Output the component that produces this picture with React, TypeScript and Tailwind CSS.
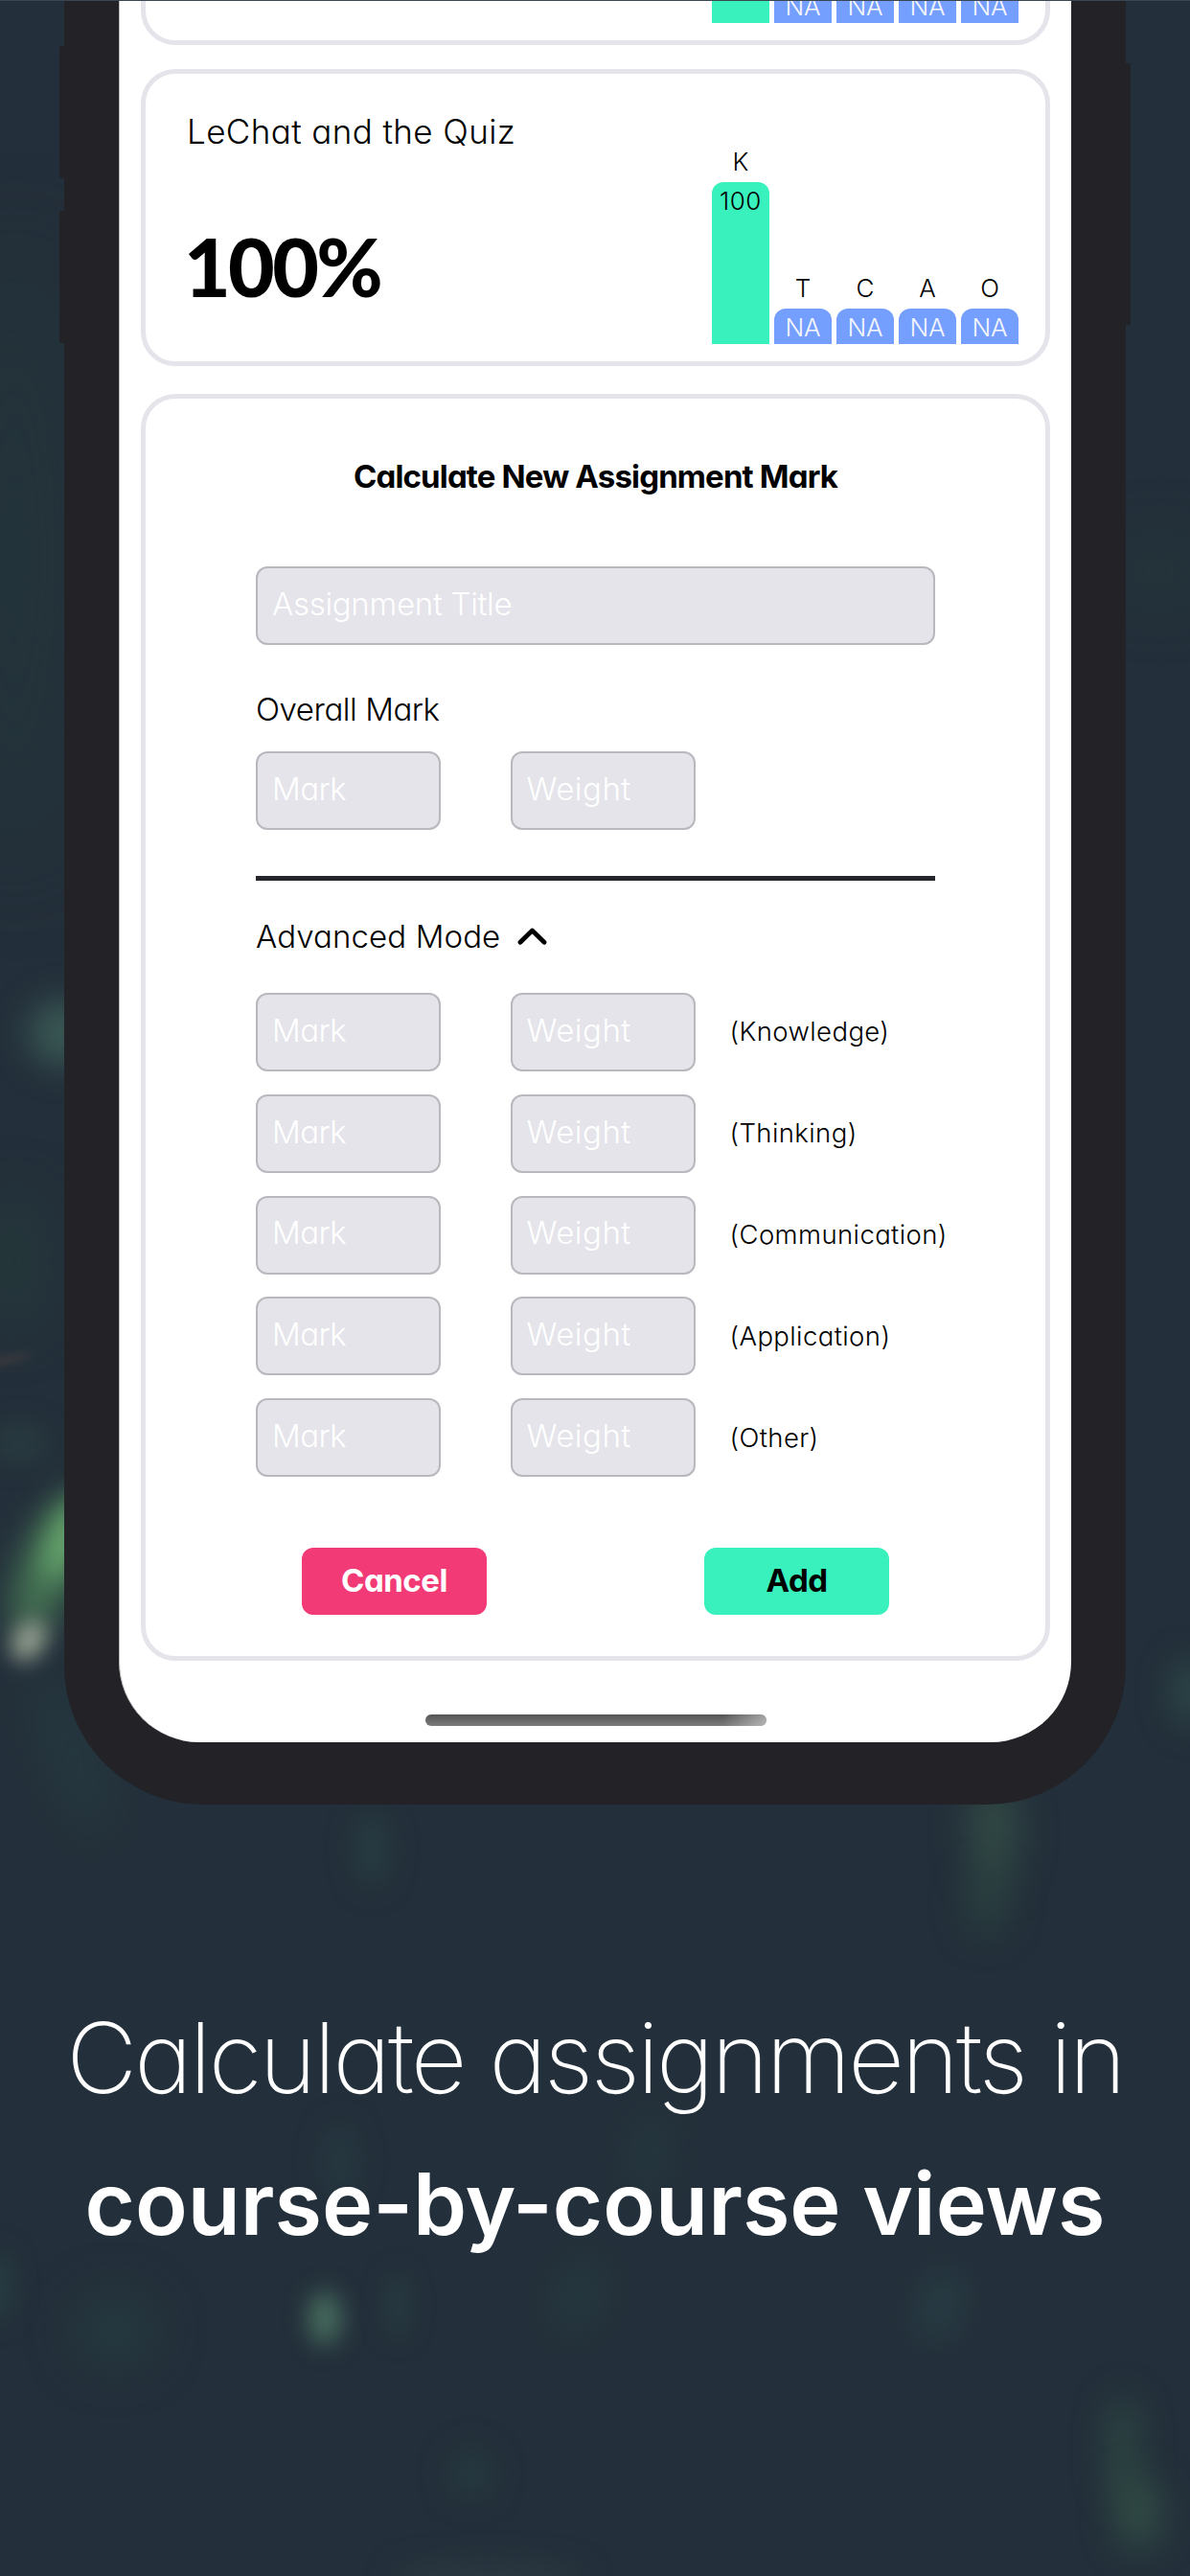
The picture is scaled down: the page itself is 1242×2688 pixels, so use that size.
import { clsx } from "clsx";

type Bar = { label: string; value: string; filled?: boolean };

const BARS: Bar[] = [
  { label: "K", value: "100", filled: true },
  { label: "T", value: "NA" },
  { label: "C", value: "NA" },
  { label: "A", value: "NA" },
  { label: "O", value: "NA" },
];

const CATEGORIES = ["(Knowledge)", "(Thinking)", "(Communication)", "(Application)", "(Other)"];

// Soft out-of-focus light spots scattered over the backdrop.
const GLOWS = [
  "left-[30px] top-[1042px] h-[70px] w-[70px] bg-[#4a7565]/60 blur-[18px]",
  "left-[24px] top-[1550px] h-[160px] w-[60px] rotate-[24deg] bg-[#4f8a5b]/75 blur-[18px]",
  "left-[52px] top-[1560px] h-[90px] w-[34px] rotate-[22deg] bg-[#72b676]/80 blur-[14px]",
  "left-[14px] top-[1688px] h-[46px] w-[32px] rotate-[30deg] bg-[#a3ad9b]/90 blur-[11px]",
  "-left-[40px] top-[1415px] h-[10px] w-[74px] -rotate-[12deg] bg-[#4a3f3f]/60 blur-[4px]",
  "-left-[10px] top-[1485px] h-[40px] w-[60px] bg-[#2d4542]/60 blur-[14px]",
  "-left-[60px] top-[260px] h-[640px] w-[150px] bg-[#24373a]/60 blur-[50px]",
  "-left-[20px] top-[1240px] h-[150px] w-[70px] bg-[#26393b]/80 blur-[26px]",
  "left-[50px] top-[1740px] h-[180px] w-[50px] -rotate-[20deg] bg-[#263f42]/60 blur-[24px]",
  "left-[1222px] top-[1730px] h-[70px] w-[40px] bg-[#2f4d4b]/80 blur-[17px]",
  "left-[1150px] top-[560px] h-[70px] w-[120px] bg-[#25383a]/60 blur-[28px]",
  "left-[374px] top-[1890px] h-[76px] w-[28px] bg-[#2c494a]/70 blur-[16px]",
  "left-[1014px] top-[1850px] h-[120px] w-[46px] bg-[#3b5a4c]/70 blur-[20px]",
  "left-[1008px] top-[1950px] h-[70px] w-[44px] bg-[#2f4a42]/60 blur-[18px]",
  "left-[340px] top-[2216px] h-[76px] w-[30px] bg-[#29454a]/60 blur-[16px]",
  "left-[658px] top-[2200px] h-[90px] w-[40px] rotate-[10deg] bg-[#263e43]/60 blur-[20px]",
  "left-[323px] top-[2390px] h-[56px] w-[32px] bg-[#528068]/85 blur-[13px]",
  "left-[404px] top-[2370px] h-[70px] w-[22px] bg-[#294347]/70 blur-[13px]",
  "left-[582px] top-[2355px] h-[80px] w-[44px] rotate-[20deg] bg-[#263e42]/70 blur-[20px]",
  "left-[960px] top-[2365px] h-[80px] w-[42px] rotate-[20deg] bg-[#294348]/70 blur-[18px]",
  "left-[80px] top-[2395px] h-[70px] w-[80px] bg-[#274044]/70 blur-[26px]",
  "left-[472px] top-[2558px] h-[44px] w-[40px] bg-[#284347]/75 blur-[17px]",
  "left-[1156px] top-[2500px] h-[110px] w-[32px] bg-[#335247]/75 blur-[18px]",
  "left-[1166px] top-[2585px] h-[74px] w-[44px] bg-[#3a5c4b]/75 blur-[19px]",
  "left-[410px] top-[2676px] h-[28px] w-[200px] bg-[#333e47]/70 blur-[16px]",
  "-left-[20px] top-[2350px] h-[70px] w-[30px] bg-[#29484c]/70 blur-[15px]",
];

function BarChart() {
  return (
    <div className="flex items-end gap-[5px]">
      {BARS.map(({ label, value, filled }) => (
        <div key={label} className="flex w-[60px] flex-col items-center text-[26px] font-[330]">
          <span className="mb-[6px] leading-[30px]">{label}</span>
          <div
            className={clsx(
              "flex w-full justify-center rounded-t-[12px] leading-[40px]",
              filled ? "h-[169px] bg-[#38f1bd] tracking-[0.5px]" : "h-[37px] bg-[#749fff] text-[#f4f6fb]",
            )}
          >
            {value}
          </div>
        </div>
      ))}
    </div>
  );
}

function MarkCard({ title, mark, className }: { title?: string; mark?: string; className?: string }) {
  return (
    <section
      className={clsx(
        "flex h-[310px] shrink-0 justify-between rounded-[36px] border-[5px] border-[#e4e4ea] pr-[28px] pb-[18px] pl-[43px]",
        className,
      )}
    >
      <div className="flex flex-col pt-[40px]">
        <h2 className="text-[35px] leading-[40px] font-[350] tracking-[0.4px]">{title}</h2>
        <p className="-ml-[3px] mt-[79px] font-['Lato',sans-serif] text-[84px] leading-[84px] font-black tracking-[-2.6px]">{mark}</p>
      </div>
      <BarChart />
    </section>
  );
}

function Field({ label, className }: { label: string; className?: string }) {
  return (
    <div
      className={clsx(
        "flex h-[82px] shrink-0 items-center rounded-[12px] border-2 border-[#b8b8be] bg-[#e4e4ea] pb-[3px] pl-[15px] text-[33px] font-light text-white",
        className,
      )}
    >
      {label}
    </div>
  );
}

function MarkWeight({ label }: { label?: string }) {
  return (
    <div className="flex items-center">
      <Field label="Mark" className="w-[193px] tracking-[-0.5px]" />
      <Field label="Weight" className="ml-[72.5px] w-[193px] tracking-[0.5px]" />
      {label && (
        <span className="ml-[36px] text-[27.5px] font-[350] tracking-[0.4px] whitespace-nowrap">{label}</span>
      )}
    </div>
  );
}

function AssignmentForm() {
  return (
    <section className="mt-[29px] flex h-[1322px] shrink-0 flex-col rounded-[36px] border-[5px] border-[#e4e4ea] px-[115px] pt-[61px]">
      <h2 className="text-center text-[33px] leading-[40px] font-bold tracking-[-0.85px] whitespace-nowrap">
        Calculate New Assignment Mark
      </h2>
      <Field label="Assignment Title" className="mt-[74px] tracking-[-0.3px]" />
      <h3 className="mt-[47px] mb-[24px] text-[33px] leading-[40px] font-[350] tracking-[-0.45px]">Overall Mark</h3>
      <MarkWeight />
      <div className="mt-[48px] h-[5px] shrink-0 bg-[#24262c]" />
      <div className="mt-[38px] flex h-[40px] items-center gap-[18px]">
        <h3 className="text-[33px] leading-[40px] font-[350] tracking-[0.1px]">Advanced Mode</h3>
        <svg className="h-[18px] w-[31px]" viewBox="0 0 31 18" fill="none" stroke="black" strokeWidth="4.8" strokeLinecap="round" strokeLinejoin="round">
          <path d="M3 15.2 15.5 3 28 15.2" />
        </svg>
      </div>
      <div className="mt-[39px] flex flex-col gap-[23.8px]">
        {CATEGORIES.map((name) => (
          <MarkWeight key={name} label={name} />
        ))}
      </div>
      <div className="mt-[74px] flex justify-between px-[48px] text-[33px] font-bold tracking-[-0.5px]">
        <button className="h-[70px] w-[193px] rounded-[12px] bg-[#f23a76] text-white">Cancel</button>
        <button className="h-[70px] w-[193px] rounded-[12px] bg-[#38f1bd]">Add</button>
      </div>
    </section>
  );
}

export default function App() {
  return (
    <main className="relative isolate flex h-[2688px] w-[1242px] flex-col overflow-hidden border-t border-[#3a4752] bg-[#232f3a] font-['Inter',sans-serif] [font-feature-settings:'cv11']">
      {GLOWS.map((glow) => (
        <div key={glow} className={clsx("absolute -z-10 rounded-[50%]", glow)} />
      ))}

      <div className="relative -mt-px ml-[67px] h-[1883px] w-[1108px] rounded-b-[145px] bg-[#222227] px-[57px]">
        <i className="absolute top-[48px] -left-[5px] h-[138px] w-[6px] rounded-l-[2px] bg-[#222227]" />
        <i className="absolute top-[220px] -left-[5px] h-[138px] w-[6px] rounded-l-[2px] bg-[#222227]" />
        <i className="absolute top-[66px] -right-[5px] h-[273px] w-[6px] rounded-r-[2px] bg-[#222227]" />

        <div className="flex h-[1818px] w-[994px] flex-col overflow-hidden rounded-b-[84px] border-l border-[#bcbcbe] bg-white px-[22px] text-black">
          <MarkCard className="-mt-[263px]" />
          <MarkCard title="LeChat and the Quiz" mark="100%" className="mt-[25px]" />
          <AssignmentForm />
          <div className="mx-auto mt-[56px] flex h-[12px] w-[356px] shrink-0 justify-end overflow-hidden rounded-full bg-linear-to-b from-[#555555] to-[#7c7c7c]">
            <div className="h-full w-[45px] bg-linear-to-r from-transparent to-white/45" />
          </div>
        </div>
      </div>

      <h1 className="mt-[189px] text-center whitespace-nowrap text-white">
        <span className="block text-[102px] leading-[150px] font-[250] tracking-[-2.9px]">Calculate assignments in</span>
        <span className="mt-[3px] block text-[90px] leading-[150px] font-semibold">course-by-course views</span>
      </h1>
    </main>
  );
}
